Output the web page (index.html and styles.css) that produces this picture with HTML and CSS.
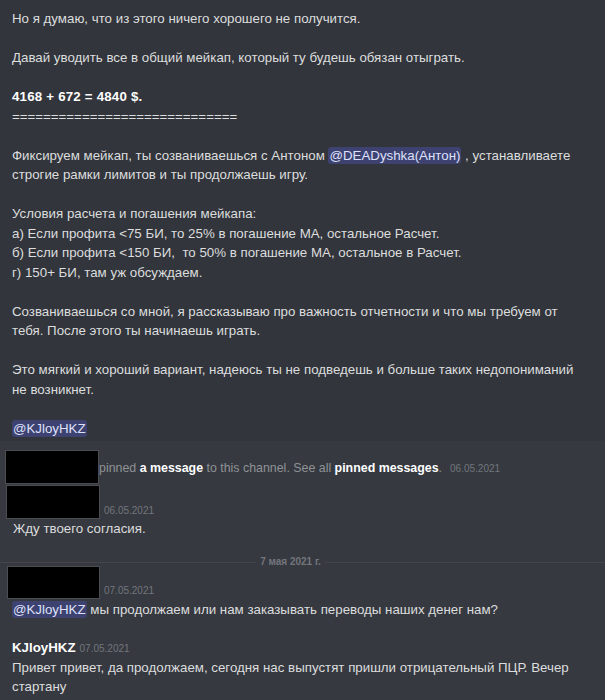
FILE: index.html
```html
<!DOCTYPE html>
<html lang="ru">
<head>
  <meta charset="UTF-8" />
  <title>Discord</title>
  <link rel="stylesheet" href="styles.css">
</head>
<body>
  <div class="chat">

    <div class="msg msg-hover">
      <div class="text">
        Но я думаю, что из этого ничего хорошего не получится.<br><br>
        Давай уводить все в общий мейкап, который ту будешь обязан отыграть.<br><br>
        <b>4168 + 672 = 4840 $.</b><br>
        =============================<br><br>
        Фиксируем мейкап, ты созваниваешься с Антоном <span class="mention">@DEADyshka(Антон)</span> , устанавливаете строгие рамки лимитов и ты продолжаешь игру.<br><br>
        Условия расчета и погашения мейкапа:<br>
        а) Если профита &lt;75 БИ, то 25% в погашение МА, остальное Расчет.<br>
        б) Если профита &lt;150 БИ,&nbsp; то 50% в погашение МА, остальное в Расчет.<br>
        г) 150+ БИ, там уж обсуждаем.<br><br>
        Созваниваешься со мной, я рассказываю про важность отчетности и что мы требуем от тебя. После этого ты начинаешь играть.<br><br>
        Это мягкий и хороший вариант, надеюсь ты не подведешь и больше таких недопониманий не возникнет.<br><br>
        <span class="mention">@KJloyHKZ</span>
      </div>
    </div>

    <div class="pin-row">
      <span class="redact"></span>
      <span class="pin-text">pinned <b>a message</b> to this channel. See all <b>pinned messages</b>.</span>
      <span class="stamp">06.05.2021</span>
    </div>

    <div class="msg msg-first">
      <div class="head">
        <span class="redact"></span>
        <span class="stamp">06.05.2021</span>
      </div>
      <div class="text">Жду твоего согласия.</div>
    </div>

    <div class="divider"><span>7 мая 2021 г.</span></div>

    <div class="msg msg-after-divider">
      <div class="head">
        <span class="redact"></span>
        <span class="stamp">07.05.2021</span>
      </div>
      <div class="text"><span class="mention">@KJloyHKZ</span> мы продолжаем или нам заказывать переводы наших денег нам?</div>
    </div>

    <div class="msg msg-named">
      <div class="head head-name">
        <span class="name">KJloyHKZ</span>
        <span class="stamp">07.05.2021</span>
      </div>
      <div class="text">Привет привет, да продолжаем, сегодня нас выпустят пришли отрицательный ПЦР. Вечер стартану</div>
    </div>

  </div>
</body>
</html>
```

FILE: styles.css
```css
html { height: 100%; }
body {
  margin: 0;
  background: #36393f;
  color: #dcddde;
  font-family: "Liberation Sans", Arial, sans-serif;
  font-size: 13.3px;
  line-height: 19.5px;
}

.chat { display: flex; flex-direction: column; }

.text { padding: 0 20px 0 12px; }
.text b { color: #fff; letter-spacing: 0.2px; }

/* highlighted (hovered) message on top */
.msg-hover {
  background: #32353b;
  padding: 9px 0 3px;
}

.mention {
  background: #3d4270;
  color: #dee0fc;
  border-radius: 3px;
  padding: 1px 1px;
  font-weight: 500;
}

/* black boxes that hide avatars / names */
.redact {
  display: block;
  flex: 0 0 auto;
  width: 94px; height: 34px;
  box-sizing: border-box;
  background: #000;
  border: 1px solid #4a4d52;
}

.stamp {
  font-size: 10px;
  line-height: 16px;
  color: #72767d;
  margin-left: 4px;
}

/* system message: pinned */
.pin-row {
  display: flex; align-items: center;
  padding: 9px 0 0 5px;
}
.pin-text {
  font-size: 12.4px;
  color: #8e9297;
  padding-top: 3px;
}
.pin-text b { color: #fff; }
.pin-row .stamp { padding-top: 3px; margin-left: 8px; }

.head {
  display: flex; align-items: flex-end;
  padding-left: 6px;
}
.msg-first { margin-top: 1px; }
.msg-first .text { padding-left: 13px; }

.divider {
  height: 1px;
  background: #42454a;
  margin-top: 23px;
  padding-right: 24px;
  display: flex; align-items: center; justify-content: center;
}
.divider span {
  background: #36393f;
  padding: 0 4px;
  font-size: 10px;
  line-height: 14px;
  font-weight: bold;
  color: #72767d;
}

.msg-after-divider { margin-top: 3px; }
.msg-after-divider .head { padding-left: 7px; }
.msg-after-divider .redact { width: 93px; height: 33px; }
.msg-after-divider .text { padding-top: 1px; }

.msg-named { margin-top: 19px; }
.head-name {
  align-items: baseline;
  padding-left: 12px;
}
.name {
  font-weight: bold;
  color: #fff;
}
```
